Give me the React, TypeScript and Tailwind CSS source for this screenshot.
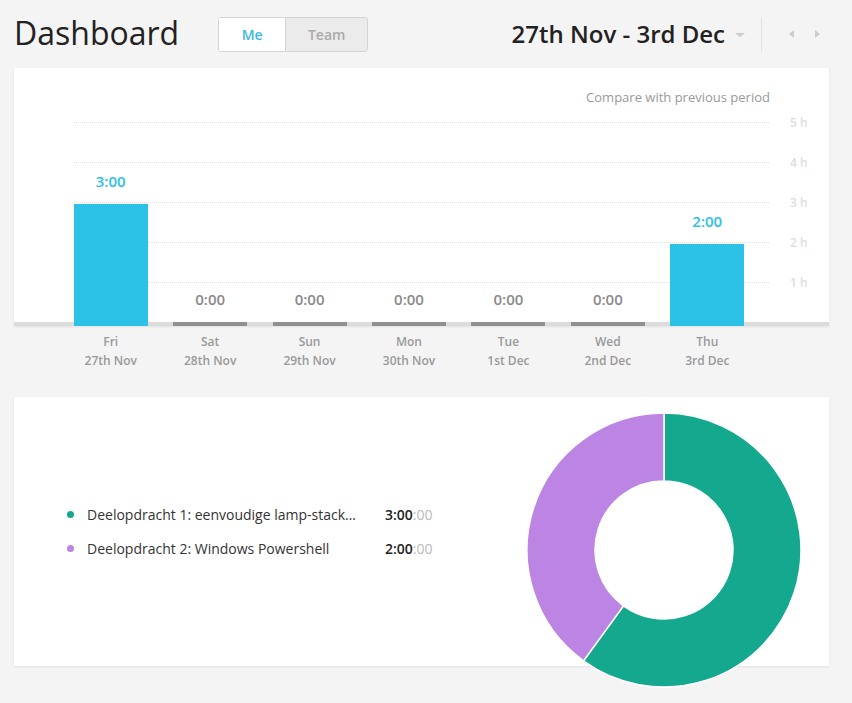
import React from "react";

const days = [
  { day: "Fri", date: "27th Nov", value: "3:00", h: 122, active: true },
  { day: "Sat", date: "28th Nov", value: "0:00", h: 4, active: false },
  { day: "Sun", date: "29th Nov", value: "0:00", h: 4, active: false },
  { day: "Mon", date: "30th Nov", value: "0:00", h: 4, active: false },
  { day: "Tue", date: "1st Dec", value: "0:00", h: 4, active: false },
  { day: "Wed", date: "2nd Dec", value: "0:00", h: 4, active: false },
  { day: "Thu", date: "3rd Dec", value: "2:00", h: 82, active: true },
];

const gridLines = ["5 h", "4 h", "3 h", "2 h", "1 h"];

const tasks = [
  { name: "Deelopdracht 1: eenvoudige lamp-stack installatie", time: "3:00", color: "bg-[#14a88e]" },
  { name: "Deelopdracht 2: Windows Powershell", time: "2:00", color: "bg-[#bd85e3]" },
];

const Donut: React.FC = () => (
  <svg width="274" height="274" viewBox="0 0 274 274" className="overflow-visible">
    <path
      d="M137,0 A137,137 0 1 1 56.47,247.84 L96.44,192.82 A69,69 0 1 0 137,68 Z"
      fill="#14a88e"
      stroke="#ffffff"
      strokeWidth="1.5"
    />
    <path
      d="M56.47,247.84 A137,137 0 0 1 137,0 L137,68 A69,69 0 0 0 96.44,192.82 Z"
      fill="#bd85e3"
      stroke="#ffffff"
      strokeWidth="1.5"
    />
  </svg>
);

const App: React.FC = () => {
  return (
    <div
      className="w-[852px] h-[703px] overflow-hidden bg-[#f4f4f4] text-[#222]"
      style={{ fontFamily: '"Open Sans", "Noto Sans", sans-serif' }}
    >
      {/* header */}
      <div className="flex items-center h-[68px] pl-[14px] pr-[32px]">
        <h1 className="text-[32px] leading-none font-normal text-[#222] -mt-[2px]">Dashboard</h1>
        <div className="ml-[39px] flex h-[35px] rounded-[3px] border border-[#d4d4d4] overflow-hidden text-[14px] font-semibold">
          <button className="w-[66px] bg-white text-[#3bb9e6]">Me</button>
          <button className="w-[82px] bg-[#ebebeb] text-[#aaa] border-l border-[#d4d4d4]">Team</button>
        </div>
        <div className="flex-1" />
        <div className="text-[24px] font-semibold text-[#222] leading-none">
          27th Nov - 3rd Dec
        </div>
        <div className="ml-[10px] mt-[2px] w-0 h-0 border-l-[5px] border-r-[5px] border-t-[4px] border-l-transparent border-r-transparent border-t-[#ccc]" />
        <div className="ml-[16px] w-px h-[35px] bg-[#e2e2e2]" />
        <div className="ml-[27px] w-0 h-0 border-t-[4px] border-b-[4px] border-r-[5px] border-t-transparent border-b-transparent border-r-[#ccc]" />
        <div className="ml-[21px] w-0 h-0 border-t-[4px] border-b-[4px] border-l-[5px] border-t-transparent border-b-transparent border-l-[#ccc]" />
      </div>

      {/* bar chart card */}
      <div className="mx-[14px] w-[815px] bg-white shadow-[0_1px_2px_rgba(0,0,0,0.08)]">
        <div className="h-[54px] flex items-start justify-end pr-[59px] pt-[20px]">
          <span className="text-[13px] text-[#999]">Compare with previous period</span>
        </div>
        <div className="relative h-[204px] border-b-[4px] border-[#dcdcdc]">
          {gridLines.map((label, i) => (
            <div
              key={label}
              className="absolute left-[60px] w-[695px] border-t border-dotted border-[#dedede]"
              style={{ top: i * 40 }}
            >
              <span className="absolute left-[716px] -top-[9px] whitespace-nowrap text-[12px] font-semibold text-[#ddd] leading-[18px]">
                {label}
              </span>
            </div>
          ))}
          <div className="absolute left-[47px] w-[696px] top-0 -bottom-[4px] grid grid-cols-7">
            {days.map((d) => (
              <div key={d.day} className="flex flex-col items-center justify-end">
                <span
                  className={`text-[15px] font-semibold leading-[20px] mb-[13px] ${
                    d.active ? "text-[#2cc1e6]" : "text-[#8a8a8a]"
                  }`}
                >
                  {d.value}
                </span>
                <div
                  className={`w-[74px] ${d.active ? "bg-[#2cc1e6]" : "bg-[#909090]"}`}
                  style={{ height: d.h }}
                />
              </div>
            ))}
          </div>
        </div>
      </div>

      {/* day labels */}
      <div className="ml-[61px] w-[696px] grid grid-cols-7 pt-[6px]">
        {days.map((d) => (
          <div key={d.day} className="flex flex-col items-center text-[12px] font-semibold text-[#999] leading-[19px]">
            <span>{d.day}</span>
            <span>{d.date}</span>
          </div>
        ))}
      </div>

      {/* tasks card */}
      <div className="mx-[14px] mt-[27px] w-[815px] h-[269px] bg-white shadow-[0_1px_2px_rgba(0,0,0,0.08)] flex items-center">
        <div className="ml-[53px] flex flex-col gap-[14px]">
          {tasks.map((t) => (
            <div key={t.name} className="flex items-center h-[20px] text-[14px]">
              <span className={`w-[7px] h-[7px] rounded-full ${t.color}`} />
              <span className="ml-[13px] w-[298px] pr-[26px] truncate text-[#333]">{t.name}</span>
              <span className="font-semibold text-[#222]">
                {t.time}
                <span className="font-normal text-[#bbb]">:00</span>
              </span>
            </div>
          ))}
        </div>
        <div className="ml-auto mr-[28px] self-start mt-[16px]">
          <Donut />
        </div>
      </div>
    </div>
  );
};

export default App;
